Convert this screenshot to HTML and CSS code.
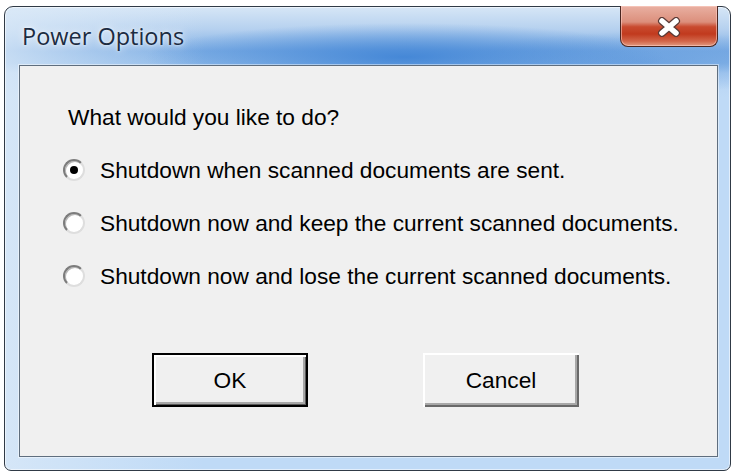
FILE: index.html
```html
<!DOCTYPE html>
<html lang="en">
<head>
<meta charset="utf-8">
<title>Power Options</title>
<link rel="stylesheet" href="styles.css">
</head>
<body>
<div class="window">
  <div class="titlebar">
    <span class="title">Power Options</span>
    <button class="close" aria-label="Close">
      <svg width="24" height="20" viewBox="0 0 24 20">
        <path d="M5 4 L19 16 M19 4 L5 16" stroke="#5a3a36" stroke-width="8" stroke-linecap="round" fill="none"/>
        <path d="M5 4 L19 16 M19 4 L5 16" stroke="#ffffff" stroke-width="5.5" stroke-linecap="round" fill="none"/>
      </svg>
    </button>
  </div>
  <div class="client">
    <p class="question">What would you like to do?</p>
    <div class="options">
      <label class="option"><span class="radio checked"></span><span>Shutdown when scanned documents are sent.</span></label>
      <label class="option"><span class="radio"></span><span>Shutdown now and keep the current scanned documents.</span></label>
      <label class="option"><span class="radio"></span><span>Shutdown now and lose the current scanned documents.</span></label>
    </div>
    <div class="buttons">
      <button class="btn default">OK</button>
      <button class="btn">Cancel</button>
    </div>
  </div>
</div>
</body>
</html>
```
FILE: styles.css
```css
html, body {
  margin: 0;
  padding: 0;
  background: #ffffff;
}

.window {
  position: relative;
  box-sizing: border-box;
  margin: 6px 0 0 4px;
  width: 727px;
  height: 465px;
  border: 1px solid #303a46;
  border-radius: 9px 9px 7px 7px;
  padding: 0 12px 13px 14px;
  display: flex;
  flex-direction: column;
  box-shadow: inset 0 0 0 1px rgba(255, 255, 255, 0.55);
  background:
    radial-gradient(ellipse 260px 34px at 400px 50px, rgba(58, 128, 212, 0.85), rgba(58, 128, 212, 0) 100%),
    radial-gradient(ellipse 200px 30px at 640px 55px, rgba(90, 150, 220, 0.6), rgba(90, 150, 220, 0) 100%),
    linear-gradient(to right, rgba(220, 234, 248, 0.75) 0, rgba(220, 234, 248, 0) 200px),
    linear-gradient(to bottom, #d6e6f6 0, #b6d1ef 22px, #7eaee4 44px, #8cb8e8 56px, #b5d3f3 66px, #bfdaf6 90px, #bfdaf6 100%);
}

.titlebar {
  height: 58px;
  flex: none;
  padding: 13px 0 0 3px;
  box-sizing: border-box;
}

.title {
  font-family: "Open Sans", "Noto Sans", sans-serif;
  font-size: 23.5px;
  line-height: 32px;
  color: #1c2c42;
  text-shadow: 0 0 8px rgba(255, 255, 255, 0.9), 0 0 3px rgba(255, 255, 255, 0.8);
}

.close {
  position: absolute;
  top: -1px;
  right: 12px;
  width: 98px;
  height: 41px;
  padding: 2px 0 0 0;
  border: 1px solid #4a2620;
  border-top: none;
  border-radius: 0 0 8px 8px;
  display: flex;
  align-items: center;
  justify-content: center;
  box-sizing: border-box;
  background: linear-gradient(to bottom, #e9b0a2 0%, #dc8f7c 40%, #c94b30 52%, #c13a1e 70%, #d2664a 88%, #e29a80 100%);
  box-shadow: inset 0 0 0 1px rgba(255, 210, 200, 0.55);
}

.client {
  flex: 1;
  background: #f0f0f0;
  border: 1px solid #5f6e7e;
  box-shadow: 0 0 0 1px rgba(255, 255, 255, 0.45);
  padding: 38px 0 0 0;
  font-family: "Liberation Sans", Arial, sans-serif;
  font-size: 22.7px;
  line-height: 26px;
  color: #000000;
}

.question {
  margin: 0;
  padding-left: 48px;
}

.options {
  margin-top: 27px;
  display: flex;
  flex-direction: column;
  gap: 27px;
  padding-left: 43px;
}

.option {
  display: flex;
  align-items: center;
  gap: 15px;
  height: 26px;
}

.radio {
  position: relative;
  box-sizing: border-box;
  width: 22px;
  height: 22px;
  flex: none;
  border-radius: 50%;
  border: 2px solid;
  border-color: #7c7c7c #dedede #dedede #7c7c7c;
  background: #ffffff;
  box-shadow: inset 1px 1px 0 #b8b8b8;
}

.radio.checked::after {
  content: "";
  position: absolute;
  left: 5px;
  top: 5px;
  width: 8px;
  height: 8px;
  border-radius: 50%;
  background: #000000;
}

.buttons {
  margin-top: 64px;
  display: flex;
  gap: 115px;
  padding-left: 132px;
}

.btn {
  box-sizing: border-box;
  width: 156px;
  height: 54px;
  font-family: "Liberation Sans", Arial, sans-serif;
  font-size: 22.7px;
  color: #000000;
  background: #f0f0f0;
  border: none;
  padding: 0;
  box-shadow:
    inset 2px 2px 0 #ffffff,
    inset -2px -2px 0 #696969,
    inset -4px -4px 0 #a8a8a8;
}

.btn.default {
  border: 2px solid #000000;
  box-shadow:
    inset 2px 2px 0 #ffffff,
    inset -1px -1px 0 #5a5a5a,
    inset -3px -3px 0 #a8a8a8;
}
```
